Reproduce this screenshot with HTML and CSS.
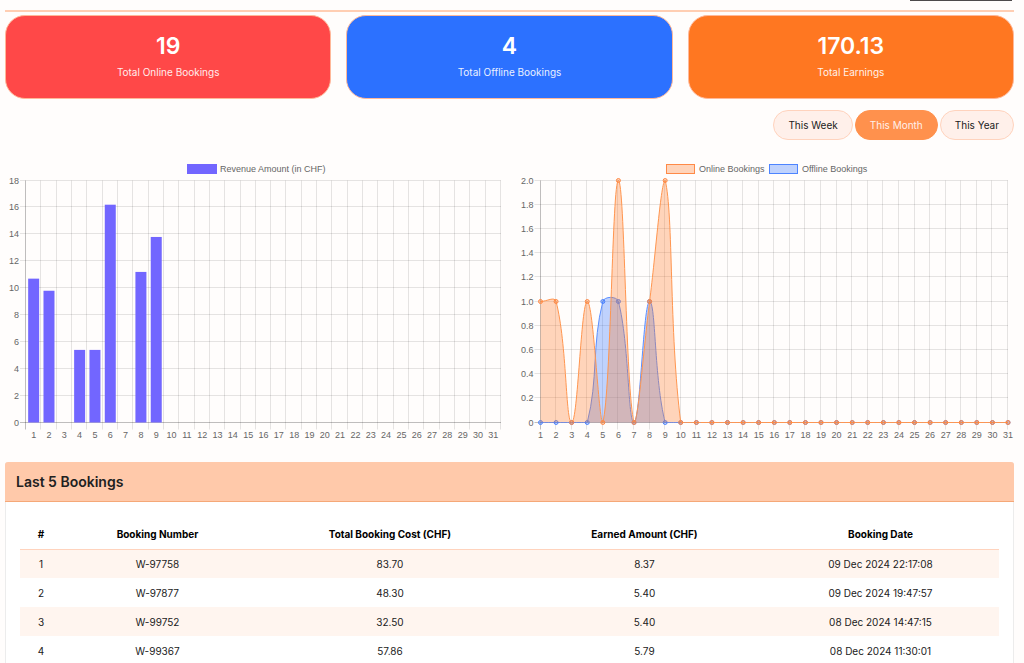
FILE: index.html
```html
<!DOCTYPE html>
<html lang="en">
<head>
<meta charset="utf-8">
<meta name="viewport" content="width=device-width, initial-scale=1">
<title>Bookings Dashboard</title>
<link rel="stylesheet" href="styles.css">
</head>
<body>
<main class="page">
  <header class="topbar"><span class="topbar-tab"></span></header>

  <section class="stats">
    <article class="stat stat-online"><h2 class="stat-value">19</h2><p class="stat-label">Total Online Bookings</p></article>
    <article class="stat stat-offline"><h2 class="stat-value">4</h2><p class="stat-label">Total Offline Bookings</p></article>
    <article class="stat stat-earnings"><h2 class="stat-value">170.13</h2><p class="stat-label">Total Earnings</p></article>
  </section>

  <div class="periods">
    <button type="button" class="period">This Week</button>
    <button type="button" class="period period-active">This Month</button>
    <button type="button" class="period">This Year</button>
  </div>

  <section class="charts">
    <svg class="chart" id="revenue" viewBox="0 0 497 285" role="img" aria-label="Revenue amount per day"></svg>
    <svg class="chart" id="bookings" viewBox="0 0 497 285" role="img" aria-label="Online and offline bookings per day"></svg>
  </section>

  <section class="panel">
    <h3 class="panel-title">Last 5 Bookings</h3>
    <div class="panel-body">
      <table class="table">
        <colgroup><col class="col-index"><col class="col-number"><col class="col-cost"><col class="col-earned"><col class="col-date"></colgroup>
        <thead>
          <tr><th>#</th><th>Booking Number</th><th>Total Booking Cost (CHF)</th><th>Earned Amount (CHF)</th><th>Booking Date</th></tr>
        </thead>
        <tbody>
          <tr><td>1</td><td>W-97758</td><td>83.70</td><td>8.37</td><td>09 Dec 2024 22:17:08</td></tr>
          <tr><td>2</td><td>W-97877</td><td>48.30</td><td>5.40</td><td>09 Dec 2024 19:47:57</td></tr>
          <tr><td>3</td><td>W-99752</td><td>32.50</td><td>5.40</td><td>08 Dec 2024 14:47:15</td></tr>
          <tr><td>4</td><td>W-99367</td><td>57.86</td><td>5.79</td><td>08 Dec 2024 11:30:01</td></tr>
        </tbody>
      </table>
    </div>
  </section>
</main>
<script src="charts.js"></script>
</body>
</html>
```

FILE: styles.css
```css
* { box-sizing: border-box; }

body {
  margin: 0;
  background: #fffdfc;
  color: #212121;
  font-family: Inter, "Liberation Sans", sans-serif;
  font-size: 10px;
}

h2, h3, p { margin: 0; }

.page { padding: 0 10px 0 5px; }

.topbar {
  display: flex;
  justify-content: flex-end;
  height: 12px;
  padding-right: 2px;
  border-bottom: 2px solid #ffceb3;
}

.topbar-tab {
  width: 102px;
  height: 1px;
  background: #4d4a4b;
}

.stats {
  display: grid;
  grid-template-columns: repeat(3, 1fr);
  gap: 15px;
  margin-top: 3px;
}

.stat {
  padding: 16px 16px 19px;
  border: 1px solid #ffb899;
  border-radius: 20px;
  color: #fff;
  text-align: center;
}

.stat-online { background: #ff4848; }
.stat-offline { background: #2c71ff; }
.stat-earnings { background: #ff7721; }

.stat-value {
  font-size: 23px;
  font-weight: 600;
  line-height: 28px;
}

.stat-label {
  margin-top: 5px;
  line-height: 14px;
  opacity: 0.9;
}

.periods {
  display: flex;
  justify-content: flex-end;
  gap: 2px;
  margin-top: 11px;
}

.period {
  height: 30px;
  padding: 0 14px;
  border: 1px solid #ffd3bd;
  border-radius: 16px;
  background: #fff0ea;
  color: #212121;
  font: inherit;
  cursor: pointer;
}

.period-active {
  border-color: #ff914d;
  background: #ff914d;
  color: #fff0ea;
}

.charts {
  display: grid;
  grid-template-columns: 1fr 1fr;
  gap: 15px;
  margin-top: 20px;
}

.chart {
  display: block;
  width: 100%;
  font-family: "Liberation Sans", Arial, sans-serif;
  font-size: 9px;
  fill: #666;
}

.grid-line { stroke: #000; stroke-opacity: 0.1; }
.axis-line { stroke: #000; stroke-opacity: 0.25; }
.tick-end { text-anchor: end; }
.tick-middle { text-anchor: middle; }
.bar { fill: #7266ff; }
.area-online { fill: #ff7721; fill-opacity: 0.3; }
.area-offline { fill: #2c71ff; fill-opacity: 0.3; }
.line-online { fill: none; stroke: #ff9650; }
.line-offline { fill: none; stroke: #5c8fff; }
.dot-online { fill: #ff7721; fill-opacity: 0.3; stroke: #ff8a47; }
.dot-offline { fill: #2c71ff; fill-opacity: 0.3; stroke: #4d84ff; }

.panel {
  margin-top: 17px;
  border: 1px solid #ececec;
  border-top: 0;
  border-radius: 3px 3px 0 0;
  background: #fff;
}

.panel-title {
  margin: 0 -1px;
  padding: 10px 11px;
  border-bottom: 1px solid #f5a878;
  border-radius: 3px 3px 0 0;
  background: #ffc9aa;
  font-size: 14px;
  font-weight: 600;
  line-height: 19px;
}

.panel-body { padding: 18px 14px 0; }

.table {
  width: 100%;
  border-collapse: collapse;
  table-layout: fixed;
  text-align: center;
}

.col-index { width: 42px; }
.col-number { width: 19.5%; }
.col-cost { width: 28%; }
.col-earned { width: 24%; }

.table th {
  height: 29px;
  padding: 0;
  border-bottom: 1px solid #ffd3bd;
  color: #000;
  font-weight: 700;
}

.table td { height: 29px; padding: 0; }
.table tbody tr:nth-child(odd) { background: #fff5ef; }
```

FILE: charts.js
```js
const DAYS = 31;
const TOP = 20.5;
const BOTTOM = 262.5;

function add(parent, name, attrs, text) {
  const node = document.createElementNS('http://www.w3.org/2000/svg', name);
  for (const key in attrs) node.setAttribute(key, attrs[key]);
  if (text !== undefined) node.textContent = text;
  parent.appendChild(node);
}

function line(svg, x1, y1, x2, y2, axis) {
  add(svg, 'line', { x1, y1, x2, y2, class: axis ? 'axis-line' : 'grid-line' });
}

function drawGrid(svg, left, right, labels, verticals) {
  const gap = (BOTTOM - TOP) / (labels.length - 1);
  labels.forEach((label, i) => {
    const y = Math.round(BOTTOM - i * gap) - 0.5;
    line(svg, left - 6, y, right, y, i === 0);
    add(svg, 'text', { x: left - 7, y: y + 3, class: 'tick-end' }, label);
  });
  for (let i = 0; i < verticals; i++) {
    const x = Math.round(left + i * (right - left) / (verticals - 1)) - 0.5;
    line(svg, x, TOP, x, BOTTOM + 7, i === 0);
  }
}

function drawRevenue() {
  const svg = document.getElementById('revenue');
  const left = 21, right = 496, step = (right - left) / DAYS;
  const values = { 1: 10.7, 2: 9.8, 4: 5.4, 5: 5.4, 6: 16.2, 8: 11.2, 9: 13.8 };
  add(svg, 'rect', { x: 182, y: 4, width: 30, height: 10, class: 'bar' });
  add(svg, 'text', { x: 215, y: 12 }, 'Revenue Amount (in CHF)');
  drawGrid(svg, left, right, [0, 2, 4, 6, 8, 10, 12, 14, 16, 18], DAYS + 1);
  for (let d = 1; d <= DAYS; d++) {
    const x = left + (d - 0.5) * step;
    if (values[d]) {
      const height = values[d] / 18 * (BOTTOM - TOP);
      add(svg, 'rect', { x: x - 5.5, y: BOTTOM - height, width: 11, height, class: 'bar' });
    }
    add(svg, 'text', { x, y: 278, class: 'tick-middle' }, d);
  }
}

// Smooth curve through the points, with control points kept inside the plot.
function curve(points) {
  const clamp = y => Math.max(TOP, Math.min(BOTTOM, y));
  const controls = points.map((p, i) => {
    const a = points[i - 1] || p, b = points[i + 1] || p;
    const before = Math.hypot(p.x - a.x, p.y - a.y);
    const after = Math.hypot(b.x - p.x, b.y - p.y);
    const f = 0.4 * before / (before + after), g = 0.4 * after / (before + after);
    return {
      inX: p.x - f * (b.x - a.x), inY: clamp(p.y - f * (b.y - a.y)),
      outX: p.x + g * (b.x - a.x), outY: clamp(p.y + g * (b.y - a.y))
    };
  });
  let path = `M${points[0].x} ${points[0].y}`;
  for (let i = 1; i < points.length; i++) {
    const c = controls[i - 1], n = controls[i];
    path += ` C${c.outX} ${c.outY} ${n.inX} ${n.inY} ${points[i].x} ${points[i].y}`;
  }
  return path;
}

function drawBookings() {
  const svg = document.getElementById('bookings');
  const left = 23.5, right = 491, step = (right - left) / (DAYS - 1);
  const series = [
    { name: 'offline', label: 'Offline Bookings', legend: 252, values: { 5: 1, 6: 1, 8: 1 } },
    { name: 'online', label: 'Online Bookings', legend: 149, values: { 1: 1, 2: 1, 4: 1, 6: 2, 8: 1, 9: 2 } }
  ];
  drawGrid(svg, left, right, ['0', '0.2', '0.4', '0.6', '0.8', '1.0', '1.2', '1.4', '1.6', '1.8', '2.0'], DAYS);
  for (const s of series) {
    add(svg, 'rect', { x: s.legend + 0.5, y: 4.5, width: 28, height: 9, class: `dot-${s.name}` });
    add(svg, 'text', { x: s.legend + 33, y: 12 }, s.label);
    const points = [];
    for (let d = 1; d <= DAYS; d++) {
      points.push({ x: left + (d - 1) * step, y: BOTTOM - (s.values[d] || 0) / 2 * (BOTTOM - TOP) });
    }
    const path = curve(points);
    add(svg, 'path', { d: `${path} L${right} ${BOTTOM} L${left} ${BOTTOM} Z`, class: `area-${s.name}` });
    add(svg, 'path', { d: path, class: `line-${s.name}` });
    for (const p of points) add(svg, 'circle', { cx: p.x, cy: p.y, r: 2, class: `dot-${s.name}` });
  }
  for (let d = 1; d <= DAYS; d++) {
    add(svg, 'text', { x: left + (d - 1) * step, y: 278, class: 'tick-middle' }, d);
  }
}

drawRevenue();
drawBookings();
```
